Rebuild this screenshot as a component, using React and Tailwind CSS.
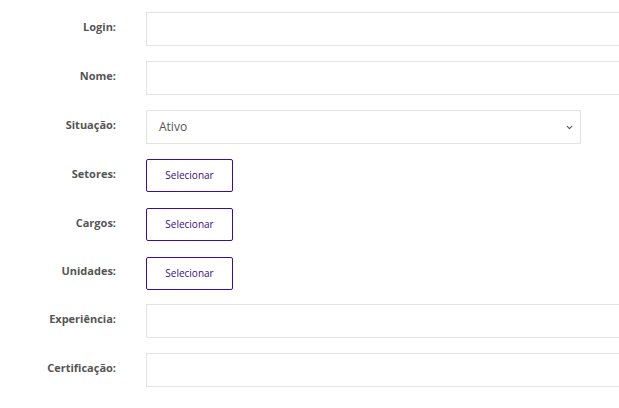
import { ChevronDown } from "lucide-react";

const font = { fontFamily: '"Open Sans", "Liberation Sans", sans-serif' };

function Row({ label, className = "", children }) {
  return (
    <div className={`flex items-center gap-[30px] ${className}`}>
      <label className="w-[116px] shrink-0 pb-[3px] text-right text-[11px] font-bold text-[#555]">
        {label}
      </label>
      {children}
    </div>
  );
}

function TextInput() {
  return (
    <input
      type="text"
      className="h-[34px] w-[520px] shrink-0 border border-[#e3e3e3] bg-white px-3 text-xs text-[#555] outline-none"
    />
  );
}

function PickButton() {
  return (
    <button className="h-[33px] w-[87px] self-start rounded-[2px] border border-[#3a0ca3] bg-white text-[10px] text-[#3b0a8a]">
      Selecionar
    </button>
  );
}

export default function App() {
  return (
    <div className="h-[408px] w-[619px] overflow-hidden bg-white" style={font}>
      <form className="flex flex-col gap-[15px] pt-[12px]">
        <Row label="Login:">
          <TextInput />
        </Row>
        <Row label="Nome:">
          <TextInput />
        </Row>
        <Row label="Situação:">
          <div className="relative h-[34px] w-[435px] border border-[#e3e3e3] bg-white">
            <span className="absolute left-[12px] top-[8px] text-xs text-[#555]">Ativo</span>
            <ChevronDown className="absolute right-[6px] top-[12px] h-[9px] w-[9px] text-[#555]" strokeWidth={3} />
          </div>
        </Row>
        <Row label="Setores:" className="h-[34px]">
          <PickButton />
        </Row>
        <Row label="Cargos:" className="h-[34px]">
          <PickButton />
        </Row>
        <Row label="Unidades:" className="h-[32px]">
          <PickButton />
        </Row>
        <Row label="Experiência:">
          <TextInput />
        </Row>
        <Row label="Certificação:">
          <TextInput />
        </Row>
      </form>
    </div>
  );
}
